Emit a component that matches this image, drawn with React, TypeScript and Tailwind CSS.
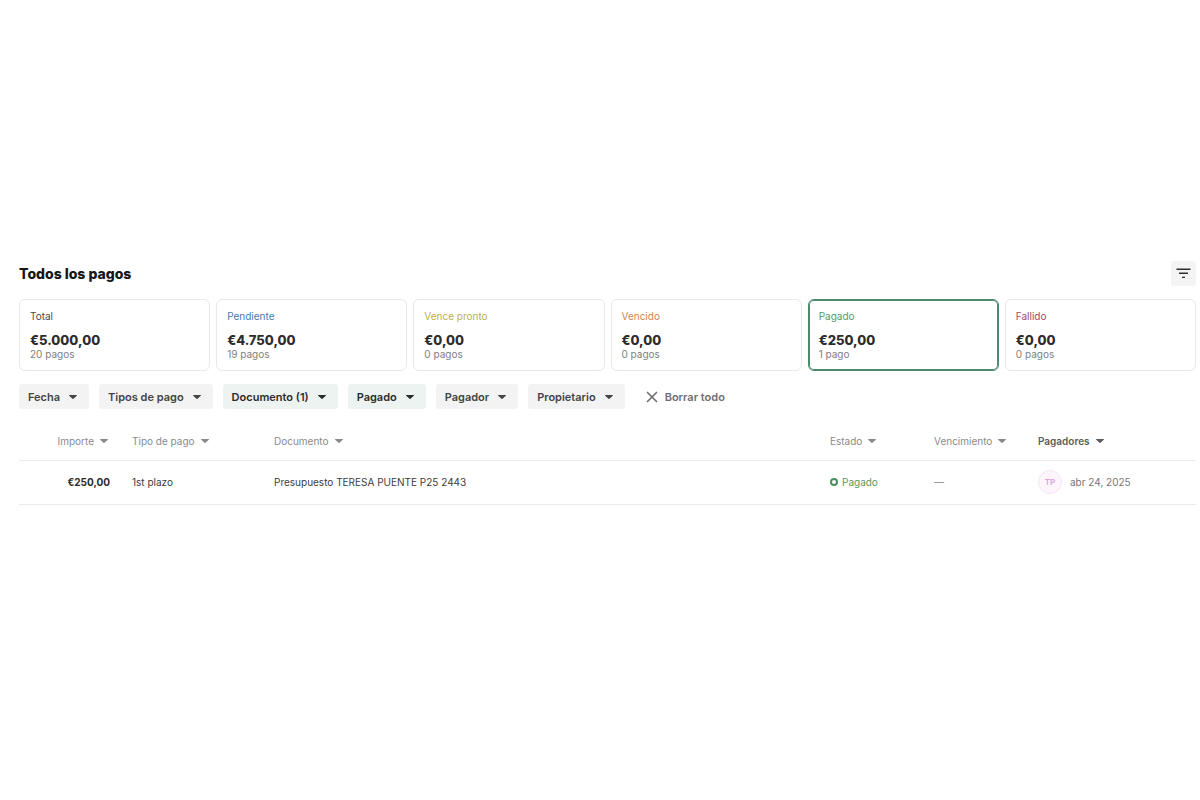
import clsx from "clsx";
import { X } from "lucide-react";

const cards = [
  { label: "Total", amount: "€5.000,00", count: "20 pagos", color: "text-[#4a4a4a]" },
  { label: "Pendiente", amount: "€4.750,00", count: "19 pagos", color: "text-[#4878b0]" },
  { label: "Vence pronto", amount: "€0,00", count: "0 pagos", color: "text-[#b9b04c]" },
  { label: "Vencido", amount: "€0,00", count: "0 pagos", color: "text-[#cf8450]" },
  { label: "Pagado", amount: "€250,00", count: "1 pago", color: "text-[#559a62]", selected: true },
  { label: "Fallido", amount: "€0,00", count: "0 pagos", color: "text-[#a04c66]" },
];

const filters = [
  { label: "Fecha" },
  { label: "Tipos de pago" },
  { label: "Documento (1)", active: true },
  { label: "Pagado", active: true },
  { label: "Pagador" },
  { label: "Propietario" },
];

function Caret() {
  return (
    <svg viewBox="0 0 8 4" className="h-1 w-2 shrink-0" fill="currentColor" aria-hidden="true">
      <path d="M0.6 0h6.8c.5 0 .7.4.4.7L4.5 3.7c-.3.3-.7.3-1 0L.2.7C-.1.4.1 0 .6 0z" />
    </svg>
  );
}

function SortButton({ label, active }: { label: string; active?: boolean }) {
  return (
    <button
      type="button"
      className={clsx(
        "inline-flex items-center gap-1.5 align-middle whitespace-nowrap",
        active ? "font-semibold text-[#5c5c5c]" : "font-normal text-[#8a8a8a]"
      )}
    >
      {label}
      <Caret />
    </button>
  );
}

export default function App() {
  return (
    <main className="min-h-screen bg-white pt-[261px] pr-1 pl-[19px] font-[Inter,sans-serif] text-[11px] leading-4 text-[#3c3c3c]">
      {/* Title */}
      <header className="flex items-center justify-between">
        <h1 className="text-[14px] leading-5 font-extrabold text-[#161616]">Todos los pagos</h1>
        <button
          type="button"
          aria-label="Filtros"
          className="flex size-[25px] items-center justify-center rounded-[3px] bg-[#f4f4f4] text-[#2e2e2e]"
        >
          <svg viewBox="0 0 15 11" className="h-[11px] w-[15px]" fill="currentColor" aria-hidden="true">
            <path d="M0.5 0.5h14v1.4h-14zM3 4.6h9v1.4h-9zM6 8.7h3v1.4h-3z" />
          </svg>
        </button>
      </header>

      {/* Summary cards */}
      <section className="mt-[13px] grid grid-cols-6 gap-1.5">
        {cards.map((card) => (
          <button
            key={card.label}
            type="button"
            className={clsx(
              "flex flex-col rounded-md border px-2.5 py-2.5 text-left text-[10px] leading-3",
              card.selected ? "border-[#4c8a6e] ring-1 ring-[#4c8a6e] ring-inset" : "border-[#e8e8e8]"
            )}
          >
            <span className={card.color}>{card.label}</span>
            <span className="mt-2.5 text-[13px] leading-4 font-extrabold text-[#2c2c2c]">{card.amount}</span>
            <span className="text-[#808080]">{card.count}</span>
          </button>
        ))}
      </section>

      {/* Filters */}
      <div className="mt-[13px] flex items-center gap-2.5">
        {filters.map((filter) => (
          <button
            key={filter.label}
            type="button"
            className={clsx(
              "flex h-[25px] items-center gap-[9px] rounded-[3px] pr-3 pl-[9px] font-semibold whitespace-nowrap",
              filter.active ? "bg-[#edf3f1] text-[#2c2c2c]" : "bg-[#f3f3f3] text-[#444444]"
            )}
          >
            {filter.label}
            <Caret />
          </button>
        ))}
        <button type="button" className="ml-2 flex items-center gap-1 font-semibold whitespace-nowrap text-[#707070]">
          <X size={18} strokeWidth={2.2} />
          Borrar todo
        </button>
      </div>

      {/* Payments */}
      <table className="mt-[13px] w-full table-fixed border-collapse text-left text-[10px]">
        <colgroup>
          <col className="w-[113px]" />
          <col className="w-[142px]" />
          <col />
          <col className="w-[104px]" />
          <col className="w-[104px]" />
          <col className="w-[158px]" />
        </colgroup>
        <thead>
          <tr className="h-[38px] border-b border-[#ebebeb]">
            <th className="pr-6 text-right">
              <SortButton label="Importe" />
            </th>
            <th><SortButton label="Tipo de pago" /></th>
            <th><SortButton label="Documento" /></th>
            <th><SortButton label="Estado" /></th>
            <th><SortButton label="Vencimiento" /></th>
            <th><SortButton label="Pagadores" active /></th>
          </tr>
        </thead>
        <tbody>
          <tr className="h-11 border-b border-[#ebebeb]">
            <td className="pr-[22px] text-right font-bold text-[#2c2c2c]">€250,00</td>
            <td>1st plazo</td>
            <td>Presupuesto TERESA PUENTE P25 2443</td>
            <td>
              <span className="flex items-center gap-1 text-[#559a62]">
                <span className="size-2 rounded-full border-2 border-[#4a8f5c]" />
                Pagado
              </span>
            </td>
            <td className="text-[#808080]">—</td>
            <td>
              <div className="flex items-center gap-2 text-[#757575]">
                <span className="flex size-6 items-center justify-center rounded-full border border-[#f8e6f6] bg-[#fdf4fc] text-[8px] font-semibold text-[#dba2d6]">
                  TP
                </span>
                abr 24, 2025
              </div>
            </td>
          </tr>
        </tbody>
      </table>
    </main>
  );
}
